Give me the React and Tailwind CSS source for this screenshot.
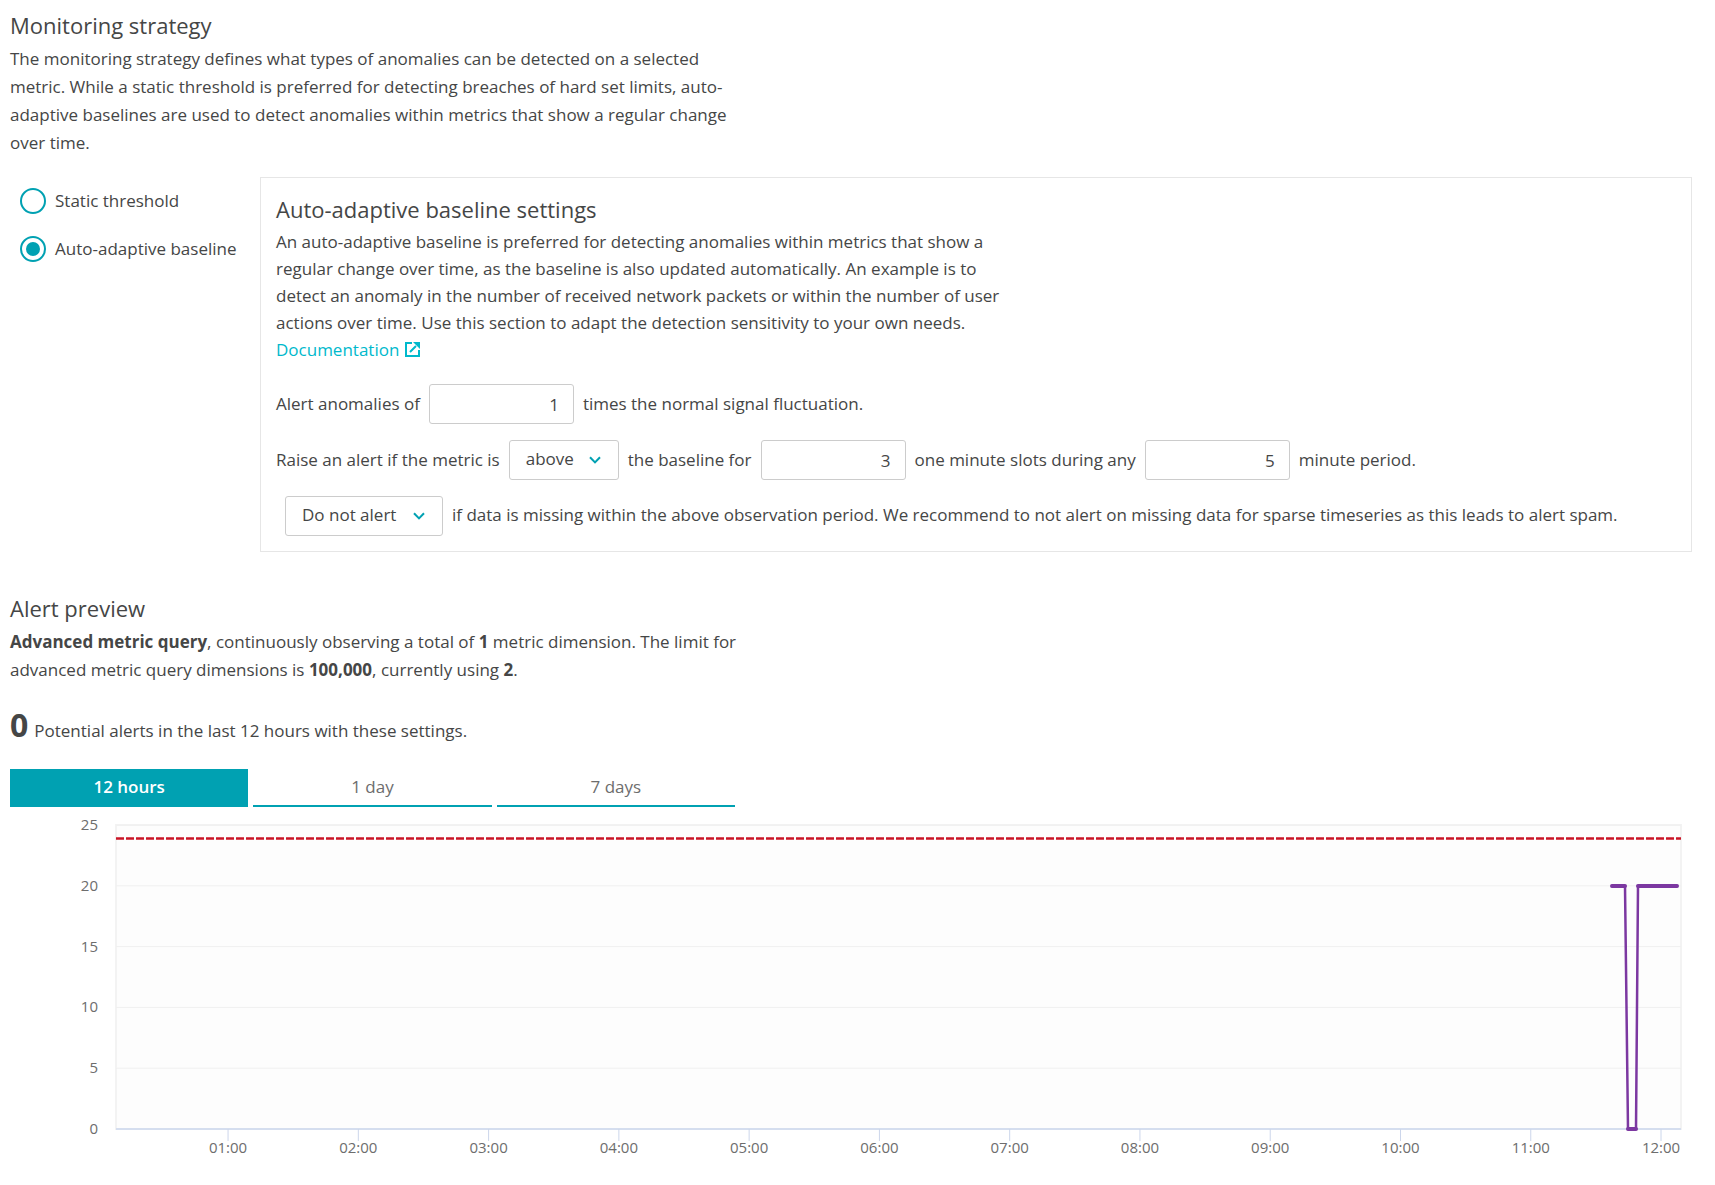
import { useState } from "react";

const HOURS = ["01:00", "02:00", "03:00", "04:00", "05:00", "06:00", "07:00", "08:00", "09:00", "10:00", "11:00", "12:00"];
const VALUES = [25, 20, 15, 10, 5, 0];
const FIRST_TICK = 7.16;
const TICK_STEP = 8.324;

function Chevron({ className }) {
  return (
    <svg className={className} width="12" height="8" viewBox="0 0 12 8" fill="none" stroke="#00a1b2" strokeWidth="2" aria-hidden="true">
      <path d="M1 1.2 6 6.4 11 1.2" />
    </svg>
  );
}

function SelectBox({ label, options, className }) {
  return (
    <span className={`relative flex h-10 shrink-0 items-center ${className}`}>
      <select aria-label={label} className="h-full w-full appearance-none rounded-[3px] border border-[#ccc] bg-white pr-8 pb-[2px] pl-4 text-[#454646]">
        {options.map((o) => (
          <option key={o}>{o}</option>
        ))}
      </select>
      <Chevron className="pointer-events-none absolute right-[18px]" />
    </span>
  );
}

function NumberBox({ label, value }) {
  return (
    <input aria-label={label} type="text" inputMode="numeric" defaultValue={value} className="h-10 w-[145px] rounded-[3px] border border-[#ccc] bg-white px-[14px] text-right" />
  );
}

function Radio({ label, value, selected, onSelect }) {
  return (
    <label className="flex items-center gap-[9px] leading-7">
      <input
        type="radio"
        name="strategy"
        value={value}
        checked={selected}
        onChange={() => onSelect(value)}
        className="grid size-[26px] shrink-0 appearance-none place-content-center rounded-full border-2 border-[#00a1b2] bg-white before:size-[14px] before:rounded-full before:content-[''] checked:before:bg-[#00a1b2]"
      />
      {label}
    </label>
  );
}

function Chart() {
  return (
    <svg className="block h-[304px] w-full overflow-visible" role="img" aria-label="Alert preview chart">
      <rect width="100%" height="304" fill="#fdfdfd" stroke="#f3f3f3" strokeWidth="2" />
      {VALUES.map((v) => {
        const y = ((25 - v) * 304) / 25;
        return (
          <g key={v}>
            {v > 0 && <line x1="0" x2="100%" y1={y} y2={y} stroke="#f0f0f0" strokeWidth="1" />}
            <text x="-18" y={y + 5} textAnchor="end" fontSize="15" fill="#6d6d6d">
              {v}
            </text>
          </g>
        );
      })}
      <line x1="0" x2="100%" y1="304" y2="304" stroke="#d5deef" strokeWidth="2" />
      {HOURS.map((h, i) => {
        const x = `${FIRST_TICK + i * TICK_STEP}%`;
        return (
          <g key={h}>
            <line x1={x} x2={x} y1="304" y2="316" stroke="#ccd6eb" strokeWidth="1" />
            <text x={x} y="328" textAnchor="middle" fontSize="15" fill="#6d6d6d">
              {h}
            </text>
          </g>
        );
      })}
      <line x1="0" x2="100%" y1="13.5" y2="13.5" stroke="#c91426" strokeWidth="2.4" strokeDasharray="8 2" />
      <svg width="100%" height="304" viewBox="0 0 1565 304" preserveAspectRatio="none" overflow="visible" fill="none" stroke="#7c38a1">
        <path d="M1495 61H1509L1512 304H1520L1522 61H1562" strokeWidth="2.5" vectorEffect="non-scaling-stroke" strokeLinejoin="round" />
        <path d="M1496 61H1509M1512 304H1520M1522 61H1561" strokeWidth="4" strokeLinecap="round" vectorEffect="non-scaling-stroke" />
      </svg>
    </svg>
  );
}

export default function App() {
  const [strategy, setStrategy] = useState("auto");
  const [range, setRange] = useState("12 hours");
  return (
    <main className="bg-white px-[10px] pt-[9px] font-['Open_Sans','Noto_Sans',sans-serif] text-[17px] text-[#454646]">
      <section>
        <h2 className="text-[22px] leading-8">Monitoring strategy</h2>
        <p className="mt-1 max-w-[730px] leading-7">
          The monitoring strategy defines what types of anomalies can be detected on a selected metric. While a static threshold is preferred for detecting breaches of hard set limits, auto-adaptive baselines are used to detect anomalies within metrics that show a regular change over time.
        </p>
        <div className="mt-5 mr-[13px] flex gap-[22px]">
          <div role="radiogroup" aria-label="Monitoring strategy" className="flex w-[228px] shrink-0 flex-col gap-5 pt-[10px] pl-[10px]">
            <Radio label="Static threshold" value="static" selected={strategy === "static"} onSelect={setStrategy} />
            <Radio label="Auto-adaptive baseline" value="auto" selected={strategy === "auto"} onSelect={setStrategy} />
          </div>
          <div className="flex-1 border border-[#e6e6e6] px-[15px] pt-[15px] pb-[15px]">
            <h3 className="text-[22px] leading-8">Auto-adaptive baseline settings</h3>
            <p className="mt-[3px] max-w-[730px] leading-[27px]">
              An auto-adaptive baseline is preferred for detecting anomalies within metrics that show a regular change over time, as the baseline is also updated automatically. An example is to detect an anomaly in the number of received network packets or within the number of user actions over time. Use this section to adapt the detection sensitivity to your own needs.{" "}
              <a href="#documentation" className="inline-flex items-center gap-[6px] text-[#00b9cc]">
                Documentation
                <svg width="15" height="15" viewBox="0 0 15 15" fill="none" stroke="#00b9cc" strokeWidth="2" aria-hidden="true">
                  <path d="M7 1H1V14H14V8M5 10 11 4" />
                  <path d="M8 0H15V7Z" fill="#00b9cc" stroke="none" />
                </svg>
              </a>
            </p>
            <div className="mt-[21px] flex items-center gap-[9px]">
              <span>Alert anomalies of</span>
              <NumberBox label="Signal fluctuation multiplier" value="1" />
              <span>times the normal signal fluctuation.</span>
            </div>
            <div className="mt-4 flex items-center gap-[9px]">
              <span>Raise an alert if the metric is</span>
              <SelectBox label="Alert condition" options={["above", "below"]} className="w-[110px]" />
              <span>the baseline for</span>
              <NumberBox label="Violating slots" value="3" />
              <span>one minute slots during any</span>
              <NumberBox label="Observation period" value="5" />
              <span>minute period.</span>
            </div>
            <div className="mt-4 flex items-baseline gap-[9px] pl-[9px]">
              <SelectBox label="Missing data alert" options={["Do not alert", "Alert"]} className="w-[158px]" />
              <span>if data is missing within the above observation period. We recommend to not alert on missing data for sparse timeseries as this leads to alert spam.</span>
            </div>
          </div>
        </div>
      </section>
      <section className="mt-10">
        <h2 className="text-[22px] leading-8">Alert preview</h2>
        <p className="mt-1 max-w-[730px] leading-7">
          <b>Advanced metric query</b>, continuously observing a total of <b>1</b> metric dimension. The limit for advanced metric query dimensions is <b>100,000</b>, currently using <b>2</b>.
        </p>
        <p className="mt-[21px] flex items-baseline gap-[6px] leading-10">
          <b className="text-[32px]">0</b>
          <span>Potential alerts in the last 12 hours with these settings.</span>
        </p>
        <div className="mt-[18px] flex w-[725px] max-w-full gap-[5px]">
          {["12 hours", "1 day", "7 days"].map((r) => (
            <button
              key={r}
              type="button"
              aria-pressed={range === r}
              onClick={() => setRange(r)}
              className="h-[38px] flex-1 border-b-2 border-[#00a1b2] text-[#6d6d6d] aria-pressed:bg-[#00a1b2] aria-pressed:font-semibold aria-pressed:text-white"
            >
              {r}
            </button>
          ))}
        </div>
        <div className="mt-[18px] mr-[24px] ml-[106px] pb-10">
          <Chart />
        </div>
      </section>
    </main>
  );
}
